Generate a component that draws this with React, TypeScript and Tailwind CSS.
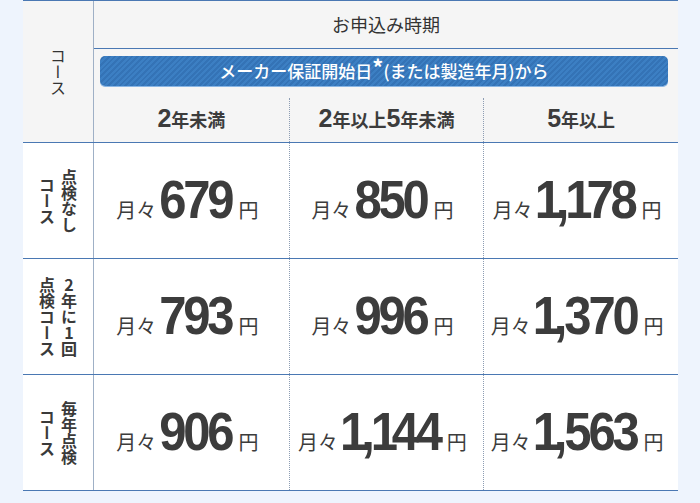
import React from 'react';

const LINE = 'border-[#4a78b3]';

const headers = [
  { a: '2', b: '年未満' },
  { a: '2', b: '年以上', c: '5', d: '年未満' },
  { a: '5', b: '年以上' },
];

const rows = [
  { label: ['点検なし', 'コース'], prices: ['679', '850', '1,178'] },
  { label: ['2年に1回', '点検コース'], prices: ['793', '996', '1,370'] },
  { label: ['毎年点検', 'コース'], prices: ['906', '1,144', '1,563'] },
];

// the "1" glyph in the design is set tight, so pull its sides in a little
const Digits = ({ value }: { value: string }) => (
  <>
    {value.split('').map((c, i) =>
      c === '1' ? (
        <span key={i} className="-ml-[1px] -mr-[3px]">1</span>
      ) : (
        <span key={i}>{c}</span>
      )
    )}
  </>
);

const Price = ({ value }: { value: string }) => (
  <div className="flex items-baseline justify-center text-[#3c3c3c] pt-[2px]">
    <span className="text-[20px] font-['Noto_Sans_CJK_JP',sans-serif]">月々</span>
    <span className="ml-[3px] inline-block origin-[50%_85%] scale-y-[1.1] text-[49px] leading-none font-bold tracking-[-0.065em] font-['Liberation_Sans',sans-serif]">
      <Digits value={value} />
    </span>
    <span className="ml-[7px] text-[20px] font-['Noto_Sans_CJK_JP',sans-serif]">円</span>
  </div>
);

export default function App() {
  return (
    <div className="w-[700px] h-[503px] bg-[#eef4fd] font-['Liberation_Sans','Noto_Sans_CJK_JP',sans-serif] text-[#333]">
      <div className="ml-[23px] w-[655px]">
        {/* header */}
        <div className={`flex bg-[#f5f5f5] border-t border-b ${LINE}`}>
          <div className="w-[71px] shrink-0 border-r border-[#9fb0c6] flex items-center justify-center">
            <span className="[writing-mode:vertical-rl] text-[16px] leading-none font-['Noto_Sans_CJK_JP',sans-serif]">
              コース
            </span>
          </div>
          <div className="flex-1 flex flex-col">
            <div className={`h-[48px] flex items-center justify-center border-b ${LINE} text-[18px] font-['Noto_Sans_CJK_JP',sans-serif]`}>
              お申込み時期
            </div>
            <div className="pt-[7px] pl-[6px] pr-[10px]">
              <div className="h-[30px] rounded-[5px] flex items-center justify-center text-white text-[17px] font-medium font-['Noto_Sans_CJK_JP',sans-serif] bg-[repeating-linear-gradient(135deg,#3c7fc3_0px,#3c7fc3_2px,#3473b6_2px,#3473b6_4px)] shadow-[0_1px_0_#8ab6e4]">
                <span>メーカー保証開始日</span>
                <span className="text-[22px] leading-none font-bold -mt-[10px]">*</span>
                <span>(または製造年月)から</span>
              </div>
            </div>
            <div className="grid grid-cols-3 mt-[12px] h-[44px]">
              {headers.map((h, i) => (
                <div
                  key={i}
                  className={`flex items-baseline justify-center pt-[8px] font-bold text-[#3c3c3c] ${i > 0 ? 'border-l border-dotted border-[#8d9db3]' : ''}`}
                >
                  <span className="text-[25px] leading-none font-['Liberation_Sans',sans-serif]">{h.a}</span>
                  <span className="text-[18px] font-['Noto_Sans_CJK_JP',sans-serif]">{h.b}</span>
                  {h.c && <span className="text-[25px] leading-none font-['Liberation_Sans',sans-serif]">{h.c}</span>}
                  {h.d && <span className="text-[18px] font-['Noto_Sans_CJK_JP',sans-serif]">{h.d}</span>}
                </div>
              ))}
            </div>
          </div>
        </div>

        {/* body rows */}
        {rows.map((r, ri) => (
          <div key={ri} className={`flex h-[116px] bg-white border-b ${LINE}`}>
            <div className="w-[71px] shrink-0 border-r border-[#9fb0c6] flex items-center justify-center">
              <span className="[writing-mode:vertical-rl] [text-orientation:upright] text-center text-[16px] leading-[22px] font-bold text-[#3a3a3a] font-['Noto_Sans_CJK_JP',sans-serif]">
                {r.label[0]}
                <br />
                {r.label[1]}
              </span>
            </div>
            <div className="flex-1 grid grid-cols-3">
              {r.prices.map((p, pi) => (
                <div
                  key={pi}
                  className={`flex items-center justify-center pr-[8px] ${pi > 0 ? 'border-l border-dotted border-[#8d9db3]' : ''}`}
                >
                  <Price value={p} />
                </div>
              ))}
            </div>
          </div>
        ))}
      </div>
    </div>
  );
}
